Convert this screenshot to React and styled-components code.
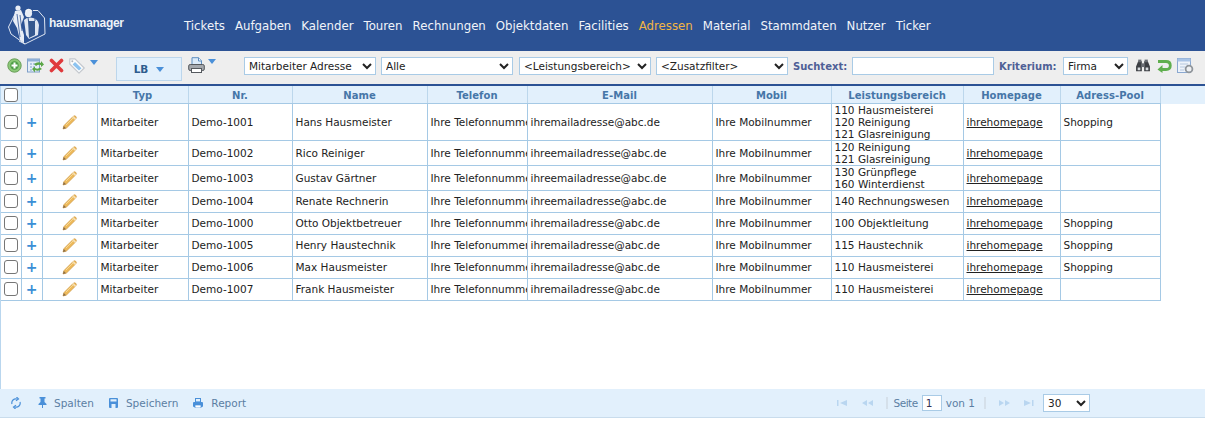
import React from "react";
import styled, { createGlobalStyle } from "styled-components";

const Global = createGlobalStyle`
  html, body { margin: 0; padding: 0; background: #fff; overflow: hidden; }
  body { font-family: "DejaVu Sans", Verdana, sans-serif; font-size: 10.5px; color: #222; }
  * { box-sizing: border-box; }
`;

const Page = styled.div`display:flex;flex-direction:column;height:421px;width:1205px;`;
const Header = styled.header`height:51px;background:#2c5294;display:flex;align-items:center;flex:none;`;
const LogoWrap = styled.div`width:184px;height:51px;display:flex;align-items:center;padding-left:8px;flex:none;`;
const LogoText = styled.span`
  font-family:"Liberation Sans",sans-serif;font-weight:700;font-size:12px;color:#eef2f8;letter-spacing:-.3px;margin-left:3px;margin-top:-5px;
`;
const Nav = styled.nav`display:flex;gap:10px;`;
const NavItem = styled.a`
  font-size:11.75px;color:${p => (p.$active ? "#f2b544" : "#f1f4f9")};white-space:nowrap;
`;
const Toolbar = styled.div`
  height:35px;flex:none;background:#eeeeee;border-bottom:2px solid #2c5294;display:flex;align-items:flex-start;
`;
const IconGroup = styled.div`display:flex;align-items:flex-start;gap:5px;padding:7px 0 0 7px;width:116px;flex:none;`;
const Caret = styled.i`display:block;width:0;height:0;border:4px solid transparent;border-top:5px solid #4a90d9;border-bottom:0;margin-top:${p => p.$mt || 0}px;`;
const LbButton = styled.div`
  width:66px;height:24px;margin-top:6px;background:#e2f0fc;border:1px solid #bcd6ec;display:flex;align-items:center;justify-content:center;gap:8px;
  color:#2e5c8e;font-weight:700;font-size:10.5px;flex:none;
`;
const PrintGroup = styled.div`display:flex;align-items:flex-start;gap:3px;margin:6px 0 0 6px;width:56px;flex:none;`;
const Filters = styled.div`display:flex;align-items:center;height:18px;margin-top:6px;`;
const Select = styled.select`
  height:18px;width:${p => p.$w}px;margin-right:${p => p.$mr || 0}px;border:1px solid #a9cbe6;background:#fff;color:#222;
  font-family:"DejaVu Sans",sans-serif;font-size:10.5px;padding:0;border-radius:0;outline:none;flex:none;
`;
const FieldLabel = styled.label`font-weight:700;font-size:10px;color:#4f5f96;white-space:nowrap;width:${p => p.$w}px;flex:none;`;
const SearchInput = styled.input`width:142px;height:18px;border:1px solid #a9cbe6;background:#fff;margin-right:5px;flex:none;outline:none;`;
const EndIcons = styled.div`display:flex;align-items:center;gap:5px;margin-left:7px;`;
const Body = styled.div`flex:1;min-height:0;border-left:1px solid #b9d6ee;overflow:hidden;`;
const HeadBand = styled.div`background:#e2f0fc;`;
const Table = styled.table`border-collapse:collapse;table-layout:fixed;width:1159px;margin-top:${p => p.$mt || 0}px;`;
const Th = styled.th`
  height:17px;padding:2px 0 0;border:1px solid #bcd7ec;border-top:0;border-left:${p => (p.$first ? 0 : "1px solid #bcd7ec")};background:#e2f0fc;color:#4676a8;font-size:10px;letter-spacing:.05px;font-weight:700;text-align:center;overflow:hidden;
`;
const Td = styled.td`
  height:${p => p.$h || 22}px;padding:0 0 0 3px;border:1px solid #a5c9e5;border-left:${p => (p.$first ? 0 : "1px solid #a5c9e5")};line-height:12px;white-space:nowrap;overflow:hidden;color:#222;font-size:10.5px;
  text-align:left;
`;
const IconTd = styled(Td)`padding:0;text-align:center;`;
const CheckHolder = styled.div`display:flex;justify-content:center;padding-top:${p => p.$top}px;`;
const Link = styled.a`color:#222;text-decoration:underline;`;
const Check = styled.input.attrs({ type: "checkbox" })`
  appearance:none;display:block;width:14px;height:14px;margin:0;background:#fff;border:1px solid #767676;border-radius:3px;
`;
const Plus = styled.span`color:#3b8fd6;font-size:14px;font-weight:700;line-height:12px;display:block;text-align:center;`;
const Footer = styled.div`
  height:29px;flex:none;background:#e2f0fc;border-bottom:1px solid #c9dcec;display:flex;align-items:center;color:#5b7ea3;margin-bottom:3px;font-size:10.5px;
`;
const FootLeft = styled.div`display:flex;align-items:center;flex:1;padding-left:11px;`;
const FootBtn = styled.span`display:flex;align-items:center;gap:${p => p.$gap}px;margin-left:${p => p.$ml}px;margin-top:-1px;`;
const Pager = styled.div`display:flex;align-items:center;height:100%;padding-right:115px;`;
const PagerIcon = styled.span`display:flex;margin-right:${p => p.$mr}px;`;
const PagerLabel = styled.span`letter-spacing:-.5px;`;
const Sep = styled.span`width:2px;height:12px;background:#d5e0ea;margin:0 ${p => p.$r}px 0 ${p => p.$l}px;`;
const PageInput = styled.input`width:20px;height:16px;border:1px solid #a9cbe6;background:#fff;margin:0 4px;padding:0 3px;font:10.5px "DejaVu Sans",sans-serif;color:#335;`;

const Logo = () => (
  <svg width="38" height="44" viewBox="8 3 38 44" fill="none" style={{ flex: "none" }}>
    <path d="M15 13 L8.5 26 L11 33 L25 43 L45 33 L44.5 17 L38 9.5 L33 9.5 M25 43 L19 40" stroke="#dfe6f2" strokeWidth="1" />
    <circle cx="18" cy="7" r="2.6" fill="#e8edf6" />
    <path d="M15 10 L21 9 L24 16 L21 24 L24 34 L24 42 L20 39 L17 27 L13 20Z" fill="#e8edf6" />
    <path d="M17 13 L20 36 M20 14 L22 30" stroke="#2c5294" strokeWidth=".8" />
    <circle cx="28.5" cy="12.5" r="3.6" fill="#e8edf6" />
    <path d="M25.5 10.5 Q28.5 6.5 32 10.5" stroke="#f6f8fb" strokeWidth="1.4" />
    <path d="M24 19 Q28 15.5 33 17 Q38 18 39 24 L38 34 L29 38 L26 34 L25 26Z" fill="#dfe6f2" />
    <path d="M28 20 H35 V34 L29 37Z" fill="#35588f" />
    <path d="M28 16.5 L28.5 20 M35 17 L35 20" stroke="#35588f" strokeWidth="1" />
  </svg>
);
const AddIcon = () => (
  <svg width="15" height="15" viewBox="0 0 15 15">
    <circle cx="7.5" cy="7.5" r="6.7" fill="#8cc878" stroke="#6b9e5a" />
    <circle cx="7.5" cy="7.5" r="4.2" fill="#4f9e47" />
    <path d="M7.5 4.5v6M4.5 7.5h6" stroke="#fff" strokeWidth="2" />
  </svg>
);
const ExportIcon = () => (
  <svg width="17" height="15" viewBox="0 0 17 15">
    <rect x=".5" y="1" width="12" height="13" fill="#e6eef8" stroke="#7f9fc8" />
    <rect x=".5" y="1" width="12" height="2.5" fill="#8fb0d8" />
    <path d="M3 6h2M3 9h2M3 12h2M6 6h2M6 9h2" stroke="#7f9fc8" />
    <path d="M7 6 Q11 3 14 5 L14 3 L17 6.5 L14 9 L14 7 Q11 6 9 8Z" fill="#5aa646" />
    <path d="M15 11 Q11 14 8 12 L8 14.5 L5 11 L8 8.5 L8 10 Q11 11.5 13 9.5Z" fill="#5aa646" />
  </svg>
);
const DelIcon = () => (
  <svg width="15" height="15" viewBox="0 0 15 15">
    <path d="M2.5 2.5 L12.5 12.5 M12.5 2.5 L2.5 12.5" stroke="#e0393c" strokeWidth="3.6" strokeLinecap="round" />
  </svg>
);
const TagIcon = () => (
  <svg width="16" height="16" viewBox="0 0 16 16">
    <path d="M.8 .8 L6 .8 L15.2 10 L10 15.2 L.8 6Z" fill="#fdfdfd" stroke="#c4c8ce" strokeWidth="1.2" strokeLinejoin="round" />
    <path d="M6 4 L12.5 10.2 L10 12.6 L3.6 6.4Z" fill="#8cc3f0" />
    <circle cx="3.3" cy="3.3" r="1" fill="#b0b5bc" />
  </svg>
);
const PrinterIcon = () => (
  <svg width="17" height="17" viewBox="0 0 17 17">
    <path d="M4 .7 H10.5 L13.5 3.7 V9 H4Z" fill="#dcebf9" stroke="#5f8fc0" />
    <path d="M10.5 .7 V4 H13.5" fill="#f4f8fc" stroke="#5f8fc0" />
    <rect x=".7" y="7.5" width="15.6" height="6" rx="1.5" fill="#a4a8ad" stroke="#55595e" />
    <rect x="3.5" y="11.5" width="10" height="4" fill="#fff" stroke="#55595e" />
  </svg>
);
const BinocularsIcon = () => (
  <svg width="16" height="14" viewBox="0 0 15 13">
    <path d="M1 7 L3 2 H6.4 V11.5 H1Z M14 7 L12 2 H8.6 V11.5 H14Z" fill="#3c3f44" />
    <rect x="3" y="0.5" width="3" height="2.5" fill="#6a6e74" /><rect x="9" y="0.5" width="3" height="2.5" fill="#6a6e74" />
    <rect x="6" y="4" width="3" height="3.5" fill="#6a6e74" />
    <path d="M2.5 8h2.5v2.5h-2.5zM10 8h2.5v2.5H10z" fill="#d6dade" />
  </svg>
);
const ResetIcon = () => (
  <svg width="16" height="14" viewBox="0 0 16 14" fill="none">
    <path d="M2 2.5 H10 Q14.3 2.5 14.3 6.5 Q14.3 10.5 10 10.5 H5" stroke="#5fae4d" strokeWidth="2.8" />
    <path d="M6.5 6 L1.5 10.5 L6.5 14Z" fill="#5fae4d" />
  </svg>
);
const ConfigIcon = () => (
  <svg width="17" height="16" viewBox="0 0 17 16">
    <rect x=".5" y=".5" width="13" height="14" fill="#eef3fa" stroke="#8aa8d0" />
    <rect x=".5" y=".5" width="13" height="3" fill="#a9c4e6" />
    <path d="M3 6h8M3 9h5M3 12h4" stroke="#b6c8de" />
    <circle cx="12" cy="11" r="3.4" fill="#eef0f2" stroke="#8f959b" strokeWidth="1.8" />
  </svg>
);
const Pencil = () => (
  <svg width="16" height="16" viewBox="0 0 16 16" style={{ display: "block", margin: "0 auto" }}>
    <path d="M2 11.5 L11 2.5 Q12.5 1 14 2.5 Q15 4 13.6 5 L4.5 14 L1 15Z" fill="#edb95a" stroke="#cf9a48" strokeWidth=".7" />
    <path d="M10.8 2.7 L13.6 5.3" stroke="#f5e0b8" strokeWidth="1.6" />
    <path d="M4 11 L11.5 3.5" stroke="#f7d894" strokeWidth="1" />
    <path d="M1 15 L1.7 12 L4 14.2Z" fill="#8a6d48" />
  </svg>
);
const SyncIcon = () => (
  <svg width="10" height="12" viewBox="0 0 10 12" fill="none" stroke="#4a90d9" strokeWidth="1.2">
    <path d="M1 7 A4 4 0 0 1 6 2 M9 5 A4 4 0 0 1 4 10" />
    <path d="M5.5 0 L7.5 2 L5 3.8 M4.5 12 L2.5 10 L5 8.2" />
  </svg>
);
const PinIcon = () => (
  <svg width="9" height="11" viewBox="0 0 9 11" fill="#4a90d9"><path d="M1.5 0H7.5V1.5H6.5V5L8.5 7V8H5V11H4V8H.5V7L2.5 5V1.5H1.5Z" /></svg>
);
const SaveIcon = () => (
  <svg width="9" height="10" viewBox="0 0 9 10" fill="#4a90d9"><path d="M0 1Q0 0 1 0H8Q9 0 9 1V9Q9 10 8 10H1Q0 10 0 9ZM1.5 1.2V3.5H7.5V1.2ZM2.5 6V10H6.5V6Z" fillRule="evenodd" /></svg>
);
const SmallPrint = () => (
  <svg width="10" height="10" viewBox="0 0 10 10" fill="#4a90d9"><path d="M2 0H8V4H2ZM0 5Q0 4 1 4H9Q10 4 10 5V8Q10 9 9 9H1Q0 9 0 8Z" /><rect x="2" y="7" width="6" height="3" fill="#fff" stroke="#4a90d9" strokeWidth=".7" /><rect x="3" y="1" width="4" height="2.4" fill="#e2f0fc" /></svg>
);
const PageArrow = ({ kind }) => {
  const paths = {
    first: "M1 1h1.5v6H1z M11 1v6L4 4z",
    prev: "M6 1v6L1 4z M12 1v6L7 4z",
    next: "M1 1v6L6 4z M7 1v6L12 4z",
    last: "M1 1v6L8 4z M9 1h1.5v6H9z",
  };
  return <svg width="12" height="8" viewBox="0 0 12 8" fill="#b9d6f0"><path d={paths[kind]} /></svg>;
};

const navItems = ["Tickets", "Aufgaben", "Kalender", "Touren", "Rechnungen", "Objektdaten", "Facilities", "Adressen", "Material", "Stammdaten", "Nutzer", "Ticker"];
const widths = [20, 21, 55, 91, 104, 135, 100, 185, 119, 132, 97, 100];
const heads = ["", "", "", "Typ", "Nr.", "Name", "Telefon", "E-Mail", "Mobil", "Leistungsbereich", "Homepage", "Adress-Pool"];
const rows = [
  { h: 36, nr: "Demo-1001", name: "Hans Hausmeister", tel: "Ihre Telefonnummer", mail: "ihremailadresse@abc.de", lb: ["110 Hausmeisterei", "120 Reinigung", "121 Glasreinigung"], pool: "Shopping" },
  { h: 24, nr: "Demo-1002", name: "Rico Reiniger", tel: "Ihre Telefonnummer", mail: "ihreemailadresse@abc.de", lb: ["120 Reinigung", "121 Glasreinigung"] },
  { h: 24, nr: "Demo-1003", name: "Gustav Gärtner", tel: "Ihre Telefonnummer", mail: "ihreemailadresse@abc.de", lb: ["130 Grünpflege", "160 Winterdienst"] },
  { nr: "Demo-1004", name: "Renate Rechnerin", tel: "Ihre Telefonnummer", mail: "ihreemailadresse@abc.de", lb: ["140 Rechnungswesen"] },
  { nr: "Demo-1000", name: "Otto Objektbetreuer", tel: "Ihre Telefonnummer", mail: "ihremailadresse@abc.de", lb: ["100 Objektleitung"], pool: "Shopping" },
  { nr: "Demo-1005", name: "Henry Haustechnik", tel: "Ihre Telefonummer", mail: "ihremailadresse@abc.de", lb: ["115 Haustechnik"], pool: "Shopping" },
  { nr: "Demo-1006", name: "Max Hausmeister", tel: "Ihre Telefonnummer", mail: "ihremailadresse@abc.de", lb: ["110 Hausmeisterei"], pool: "Shopping" },
  { nr: "Demo-1007", name: "Frank Hausmeister", tel: "Ihre Telefonnummer", mail: "ihremailadresse@abc.de", lb: ["110 Hausmeisterei"] },
];

export default function App() {
  return (
    <Page>
      <Global />
      <Header>
        <LogoWrap><Logo /><LogoText>hausmanager</LogoText></LogoWrap>
        <Nav>{navItems.map(n => <NavItem key={n} $active={n === "Adressen"}>{n}</NavItem>)}</Nav>
      </Header>
      <Toolbar>
        <IconGroup><AddIcon /><ExportIcon /><DelIcon /><TagIcon /><Caret $mt={2} /></IconGroup>
        <LbButton>LB <Caret /></LbButton>
        <PrintGroup><PrinterIcon /><Caret $mt={2} /></PrintGroup>
        <Filters>
          <Select $w={132} $mr={5}><option>Mitarbeiter Adresse</option></Select>
          <Select $w={132} $mr={6}><option>Alle</option></Select>
          <Select $w={132} $mr={5}><option>&lt;Leistungsbereich&gt;</option></Select>
          <Select $w={132} $mr={5}><option>&lt;Zusatzfilter&gt;</option></Select>
          <FieldLabel $w={59}>Suchtext:</FieldLabel>
          <SearchInput />
          <FieldLabel $w={64}>Kriterium:</FieldLabel>
          <Select $w={65}><option>Firma</option></Select>
          <EndIcons><BinocularsIcon /><ResetIcon /><ConfigIcon /></EndIcons>
        </Filters>
      </Toolbar>
      <Body>
        <HeadBand>
          <Table>
            <colgroup>{widths.map((w, i) => <col key={i} width={w} />)}</colgroup>
            <thead>
              <tr>{heads.map((h, i) => <Th key={i} $first={i === 0}>{i === 0 ? <CheckHolder $top={0}><Check /></CheckHolder> : h}</Th>)}</tr>
            </thead>
          </Table>
        </HeadBand>
        <Table $mt={-1}>
          <colgroup>{widths.map((w, i) => <col key={i} width={w} />)}</colgroup>
          <tbody>
            {rows.map(r => (
              <tr key={r.nr}>
                <IconTd $first $h={r.h}><CheckHolder $top={0}><Check /></CheckHolder></IconTd>
                <IconTd><Plus>+</Plus></IconTd>
                <IconTd><Pencil /></IconTd>
                <Td>Mitarbeiter</Td>
                <Td>{r.nr}</Td>
                <Td>{r.name}</Td>
                <Td>{r.tel}</Td>
                <Td>{r.mail}</Td>
                <Td>Ihre Mobilnummer</Td>
                <Td>{r.lb.map(l => <div key={l}>{l}</div>)}</Td>
                <Td><Link>ihrehomepage</Link></Td>
                <Td>{r.pool}</Td>
              </tr>
            ))}
          </tbody>
        </Table>
      </Body>
      <Footer>
        <FootLeft>
          <SyncIcon />
          <FootBtn $ml={17} $gap={7}><PinIcon />Spalten</FootBtn>
          <FootBtn $ml={15} $gap={8}><SaveIcon />Speichern</FootBtn>
          <FootBtn $ml={15} $gap={8}><SmallPrint />Report</FootBtn>
        </FootLeft>
        <Pager>
          <PagerIcon $mr={13}><PageArrow kind="first" /></PagerIcon>
          <PagerIcon $mr={0}><PageArrow kind="prev" /></PagerIcon>
          <Sep $l={13} $r={6} />
          <PagerLabel>Seite</PagerLabel><PageInput defaultValue="1" />von 1
          <Sep $l={9} $r={12} />
          <PagerIcon $mr={13}><PageArrow kind="next" /></PagerIcon>
          <PagerIcon $mr={8}><PageArrow kind="last" /></PagerIcon>
          <Select $w={47}><option>30</option></Select>
        </Pager>
      </Footer>
    </Page>
  );
}
